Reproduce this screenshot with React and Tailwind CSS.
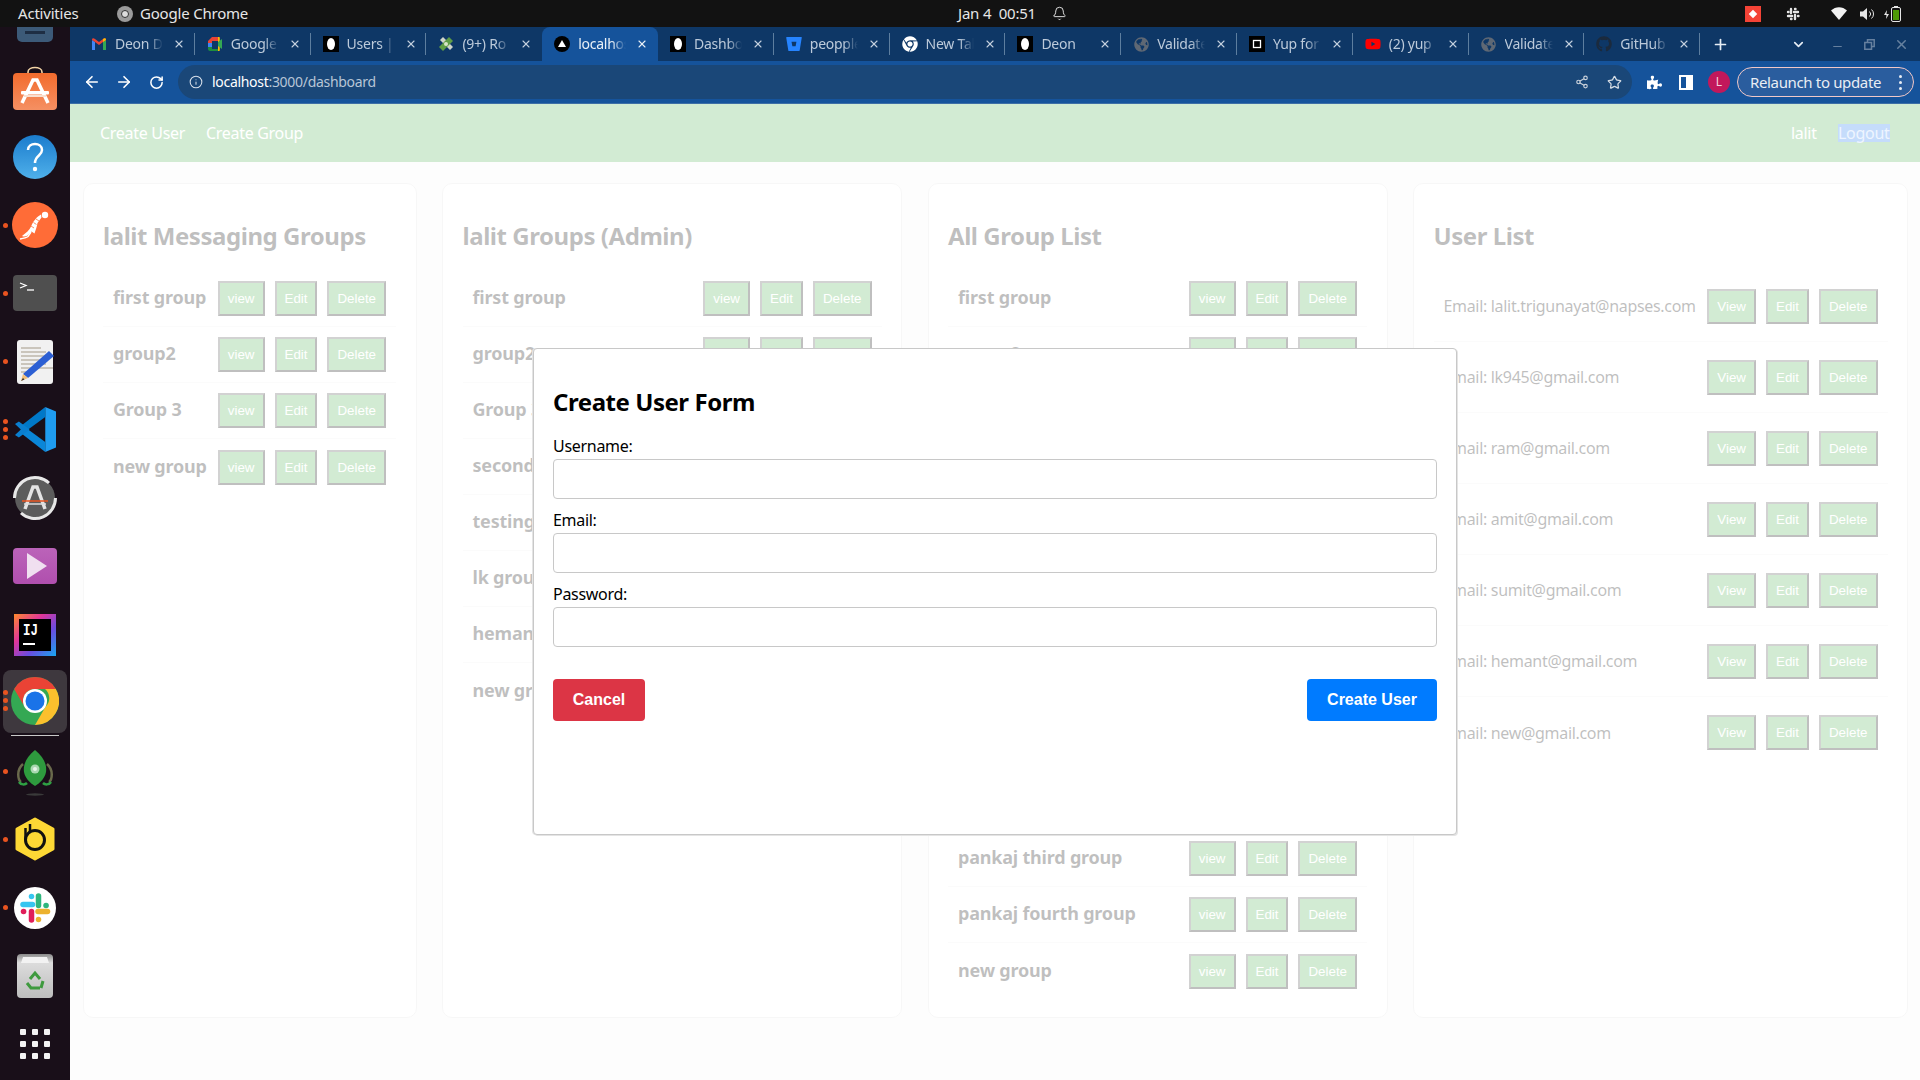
import React from "react";
import { ArrowLeft, ArrowRight, RotateCw, Info, Share2, Star, ChevronDown, Plus, X, Minus, Bell } from "lucide-react";
import { FaPuzzlePiece, FaGithub, FaGlobeAmericas, FaChrome, FaBitbucket, FaYoutube } from "react-icons/fa";

const egg = (
  <svg width="16" height="16" viewBox="0 0 16 16"><rect width="16" height="16" fill="#000" /><ellipse cx="8" cy="8" rx="4" ry="6" fill="#fff" /></svg>
);
const Gmail = () => (
  <svg width="16" height="16" viewBox="0 0 16 16"><path d="M1 14V4l3 2v8z" fill="#4285f4" /><path d="M12 14V6l3-2v10z" fill="#34a853" /><path d="M1 4c0-2 1.500-2 3-1l4 3 4-3c1.500-1 3-1 3 1l-3 2-4 3-4-3z" fill="#ea4335" /><path d="M12 6l3-2c0-2-1.500-2-3-1z" fill="#fbbc04" /></svg>
);
const Meet = () => (
  <svg width="16" height="16" viewBox="0 0 16 16"><path d="M1 5l4-4h6v4H5v2H1z" fill="#ea4335" /><path d="M1 7h4v4H1z" fill="#4285f4" /><path d="M1 11h4v2h6v2H3c-1 0-2-1-2-2z" fill="#1e8e3e" /><path d="M11 1v14h1c.5 0 .8-.5.8-1V2c0-.5-.3-1-.8-1z" fill="#fbbc04" /><path d="M11 6l4-3v10l-4-3z" fill="#34a853" /></svg>
);
const Roadmap = () => (
  <svg width="16" height="16" viewBox="0 0 16 16"><path d="M2 4l3-3 10 10-3 3z" fill="#cfd6c8" /><path d="M1 11L11 1l4 4L5 15z" fill="#5f9e46" /><circle cx="8" cy="8" r="2" fill="#d8e6c8" /></svg>
);
const Vercel = () => (
  <svg width="16" height="16" viewBox="0 0 16 16"><circle cx="8" cy="8" r="8" fill="#000" /><path d="M8 4l4 7H4z" fill="#fff" /></svg>
);
const Yup = () => (
  <svg width="16" height="16" viewBox="0 0 16 16"><rect width="16" height="16" fill="#000" /><rect x="4.500" y="4.500" width="7" height="7" fill="none" stroke="#fff" strokeWidth="1.300" /></svg>
);

const tabs = [
  { t: "Deon D", i: <Gmail /> },
  { t: "Google", i: <Meet /> },
  { t: "Users |", i: egg },
  { t: "(9+) Ro", i: <Roadmap /> },
  { t: "localhost", i: <Vercel />, active: true },
  { t: "Dashboard", i: egg },
  { t: "peopple", i: <FaBitbucket size={16} color="#2684ff" /> },
  { t: "New Tab", i: <FaChrome size={16} color="#ffffff" /> },
  { t: "Deon", i: egg },
  { t: "Validate", i: <FaGlobeAmericas size={15} color="#5f6874" /> },
  { t: "Yup for", i: <Yup /> },
  { t: "(2) yup", i: <FaYoutube size={16} color="#ff0000" /> },
  { t: "Validate", i: <FaGlobeAmericas size={15} color="#5f6874" /> },
  { t: "GitHub", i: <FaGithub size={16} color="#1b2a3d" /> },
];

const card1 = ["first group", "group2", "Group 3", "new group"];
const card2 = ["first group", "group2", "Group 3", "second group", "testing group", "lk group", "hemant group", "new group"];
const card3 = ["first group", "group2", "Group 3", "second group", "testing group", "lk group", "hemant group", "pankaj group", "pankaj second", "amit group", "pankaj third group", "pankaj fourth group", "new group"];
const users = ["lalit.trigunayat@napses.com", "lk945@gmail.com", "ram@gmail.com", "amit@gmail.com", "sumit@gmail.com", "hemant@gmail.com", "new@gmail.com"];

function Btn({ children }) {
  return (
    <button className="ml-[10px] px-[8px] py-[8px] h-[35px] bg-[#4caf50] text-white text-[13.33px] leading-[15px] font-['Liberation_Sans',sans-serif] border-2 border-solid border-t-[#4c4c4c] border-l-[#4c4c4c] border-b-black border-r-black shrink-0">
      {children}
    </button>
  );
}

function Card({ title, width, children }) {
  return (
    <div className="h-[835px] bg-white border border-[#e0e0e0] rounded-[10px] px-[19.5px] pt-[38px] shrink-0" style={{ width }}>
      <h2 className="text-[24px] leading-[27px] font-bold text-black mb-[22px] tracking-[-0.45px] whitespace-nowrap">{title}</h2>
      {children}
    </div>
  );
}

function GroupRow({ name }) {
  return (
    <div className="h-[56px] flex items-center justify-between pl-[10px] pr-[10px] border-b border-[#eeeeee] last:border-b-0">
      <span className="mb-[2px] text-[18px] font-bold text-black whitespace-nowrap tracking-[-0.2px]">{name}</span>
      <div className="flex shrink-0">
        <Btn>view</Btn>
        <Btn>Edit</Btn>
        <Btn>Delete</Btn>
      </div>
    </div>
  );
}

function UserRow({ email }) {
  return (
    <div className="h-[71px] flex items-center justify-between pl-[10px] pr-[10px] border-b border-[#eeeeee] last:border-b-0">
      <span className="text-[16px] text-black whitespace-nowrap tracking-[-0.32px]">Email: {email}</span>
      <div className="flex shrink-0">
        <Btn>View</Btn>
        <Btn>Edit</Btn>
        <Btn>Delete</Btn>
      </div>
    </div>
  );
}

function Field({ label }) {
  return (
    <div className="mb-[8px]">
      <label className="block text-[16px] leading-[22px] h-[26px] pt-[2px] text-black tracking-[-0.3px]">{label}</label>
      <input className="block w-full h-[40px] border border-[#c8c8c8] rounded-[4px] bg-white" />
    </div>
  );
}

function DockSlot({ dots = 0, children }) {
  return (
    <div className="relative h-[68.25px] w-[70px] flex items-center justify-center shrink-0">
      {dots > 0 && (
        <div className="absolute left-[3px] top-0 bottom-0 flex flex-col justify-center gap-[3px]">
          {Array.from({ length: dots }).map((_, i) => (
            <span key={i} className="block w-[5px] h-[5px] rounded-full bg-[#e95420]" />
          ))}
        </div>
      )}
      {children}
    </div>
  );
}

const SoftwareIcon = () => (
  <svg width="44" height="46" viewBox="0 0 44 46">
    <defs><linearGradient id="sw" x1="0" y1="0" x2="0" y2="1"><stop offset="0" stopColor="#f26b2d" /><stop offset="1" stopColor="#f59063" /></linearGradient></defs>
    <path d="M15 9V6c0-6 14-6 14 0v3" fill="none" stroke="#f3d4a6" strokeWidth="1.600" />
    <rect x="0" y="7" width="44" height="37" rx="4" fill="url(#sw)" />
    <path d="M9 37L20 14h4l11 23" fill="none" stroke="#fff" strokeWidth="3.500" />
    <rect x="8" y="25" width="28" height="3.500" rx="1" fill="#fff" />
    <rect x="11" y="29" width="22" height="2" fill="#f9e0d0" />
  </svg>
);
const HelpIcon = () => (
  <svg width="44" height="44" viewBox="0 0 44 44">
    <defs><linearGradient id="hp" x1="0" y1="0" x2="0" y2="1"><stop offset="0" stopColor="#1b7ccd" /><stop offset="1" stopColor="#4fb0ea" /></linearGradient></defs>
    <circle cx="22" cy="22" r="22" fill="url(#hp)" />
    <path d="M15 15c0-8 14-8 14 0 0 6-7 5-7 13" fill="none" stroke="#fff" strokeWidth="2.500" />
    <circle cx="22" cy="34" r="2.200" fill="#fff" />
  </svg>
);
const PostmanIcon = () => (
  <svg width="46" height="46" viewBox="0 0 46 46">
    <circle cx="23" cy="23" r="23" fill="#ff6c37" />
    <circle cx="33" cy="13" r="3.200" fill="#fff" />
    <path d="M29 12.500c-4 2-8 7-10 12-1 2-2 3.500-3.500 5L10 34c2 1 4 .5 5.500-.5l4-4 3 2c1-3 2.500-7 3-10.500l4-5.500z" fill="#fff" />
    <path d="M19 30l-3 4.500c-2 1.500-5 2-8 2.500" fill="none" stroke="#fff" strokeWidth="1.500" />
    <path d="M19 24l3 2M21.500 20.500l3 2M24 17l3 2" stroke="#ff6c37" strokeWidth=".8" />
  </svg>
);
const TerminalIcon = () => (
  <svg width="44" height="36" viewBox="0 0 44 36">
    <rect width="44" height="36" rx="4" fill="#4f4f4f" />
    <path d="M7 8l6 2.500-6 2.500" fill="none" stroke="#fff" strokeWidth="1.300" />
    <path d="M14 15h7" stroke="#fff" strokeWidth="1.300" />
  </svg>
);
const EditorIcon = () => (
  <svg width="38" height="44" viewBox="0 0 38 44">
    <rect x="1" width="36" height="44" rx="3" fill="#f1f1f1" />
    <path d="M5 8h20M5 12h25M5 16h25M5 20h25M5 24h25M5 28h32M5 32h10" stroke="#bdb6aa" strokeWidth="1.400" />
    <path d="M7 34l26-23 5 5-26 22z" fill="#2c5fd3" />
    <path d="M7 34l5 4-7 3z" fill="#f3c078" />
    <path d="M5 41l2-3 1.500 1.500z" fill="#333" />
  </svg>
);
const VSCodeIcon = () => (
  <svg width="41" height="45" viewBox="0 0 42 50" preserveAspectRatio="none">
    <path d="M31 0l11 5v40l-11 5z" fill="#1f9cf0" />
    <path d="M31 0L5 22l6 5L31 11z" fill="#0078c8" />
    <path d="M31 50L5 28l6-5L31 39z" fill="#0a86d8" />
    <path d="M0 18l5-3 26 21v14L0 32z" fill="#0a7fd0" opacity="0" />
    <path d="M0 19l4-3 11 9-11 9-4-3 6-6z" fill="#0a7fd0" />
  </svg>
);
const UpdaterIcon = () => (
  <svg width="46" height="46" viewBox="0 0 46 46">
    <circle cx="23" cy="23" r="20" fill="#5c5c5c" />
    <path d="M2.500 23A20.500 20.500 0 0 1 37 8M43.500 23A20.500 20.500 0 0 1 9 38" fill="none" stroke="#e8e8e8" strokeWidth="3" />
    <path d="M13 34l8-22h4l8 22" fill="none" stroke="#e4e4e4" strokeWidth="3.500" />
    <path d="M10 26h26" stroke="#e95420" strokeWidth="1.500" />
    <path d="M12 29h22" stroke="#dcdcdc" strokeWidth="1.500" />
  </svg>
);
const VideoIcon = () => (
  <svg width="44" height="36" viewBox="0 0 44 36">
    <defs><linearGradient id="vd" x1="0" y1="0" x2="0" y2="1"><stop offset="0" stopColor="#bb63b9" /><stop offset="1" stopColor="#b04fae" /></linearGradient></defs>
    <rect width="44" height="36" rx="4" fill="url(#vd)" />
    <path d="M14 5l20 13-20 13z" fill="#f0dff0" />
  </svg>
);
const IJIcon = () => (
  <svg width="42" height="42" viewBox="0 0 42 42">
    <defs><linearGradient id="ij" x1="0" y1="0" x2="1" y2="1"><stop offset="0" stopColor="#ff8a2c" /><stop offset=".35" stopColor="#e0359a" /><stop offset=".65" stopColor="#6b4ce0" /><stop offset="1" stopColor="#16a8f0" /></linearGradient></defs>
    <rect width="42" height="42" fill="url(#ij)" />
    <rect x="5" y="5" width="32" height="32" fill="#000" />
    <text x="9" y="21" fill="#fff" fontFamily="'Liberation Mono',monospace" fontWeight="700" fontSize="17" textLength="15" lengthAdjust="spacingAndGlyphs">IJ</text>
    <rect x="9" y="29" width="12" height="2" fill="#fff" />
  </svg>
);
const ChromeIcon = () => (
  <svg width="48" height="48" viewBox="0 0 48 48">
    <circle cx="24" cy="24" r="24" fill="#34a853" />
    <path d="M44.800 12A24 24 0 0 1 24 48l10.400-18a12 12 0 0 0-.4-18z" fill="#fbc02d" />
    <path d="M24 0a24 24 0 0 1 20.800 12H24a12 12 0 0 0-10.400 18L3.200 12A24 24 0 0 1 24 0z" fill="#ea4335" />
    <circle cx="24" cy="24" r="12" fill="#fff" />
    <circle cx="24" cy="24" r="9.500" fill="#1a73e8" />
  </svg>
);
const RocketIcon = () => (
  <svg width="36" height="46" viewBox="0 0 36 46">
    <path d="M6 14C-1 20 1 30 4 32M30 14c7 6 5 16 2 18" fill="none" stroke="#6a6a4c" strokeWidth="2.500" />
    <path d="M18 0c9 7 12 15 11 22-1 6-6 11-11 14-5-3-10-8-11-14C6 15 9 7 18 0z" fill="#2e9a3e" />
    <circle cx="18" cy="19" r="4.500" fill="#a8d8b0" />
    <circle cx="18" cy="19" r="2" fill="#e8f4ea" />
    <path d="M2 32c2 3 6 3 8 1M34 32c-2 3-6 3-8 1" fill="none" stroke="#2ea043" strokeWidth="2.500" />
    <ellipse cx="18" cy="44.500" rx="9" ry="1.200" fill="#3a3a3a" />
  </svg>
);
const BeeIcon = () => (
  <svg width="40" height="44" viewBox="0 0 40 44">
    <path d="M20 2l18 10v20L20 42 2 32V12z" fill="#fdd835" stroke="#fdd835" strokeWidth="3" strokeLinejoin="round" />
    <circle cx="20" cy="23" r="9.500" fill="none" stroke="#111" strokeWidth="3" />
    <path d="M10.500 23V11M15 15V7" stroke="#111" strokeWidth="2.500" />
  </svg>
);
const SlackIcon = () => (
  <svg width="42" height="42" viewBox="0 0 42 42">
    <circle cx="21" cy="21" r="21" fill="#fff" />
    <g strokeLinecap="round" strokeWidth="5.500" fill="none">
      <path d="M24.500 9v9.500" stroke="#2eb67d" /><path d="M32 18.500h.1" stroke="#2eb67d" />
      <path d="M9 17.500h9.500" stroke="#36c5f0" /><path d="M17.500 9.500v.1" stroke="#36c5f0" />
      <path d="M17.500 24.500V33" stroke="#e01e5a" /><path d="M9.500 24.500h.1" stroke="#e01e5a" />
      <path d="M24 24.500h9.500" stroke="#ecb22e" /><path d="M24.500 32.500v.1" stroke="#ecb22e" />
    </g>
  </svg>
);
const TrashIcon = () => (
  <svg width="36" height="44" viewBox="0 0 36 44">
    <defs><linearGradient id="tr" x1="0" y1="0" x2="0" y2="1"><stop offset="0" stopColor="#8a8a8a" /><stop offset=".2" stopColor="#dcdcdc" /><stop offset="1" stopColor="#bdbdbd" /></linearGradient></defs>
    <rect width="36" height="44" rx="4" fill="url(#tr)" />
    <path d="M4 9l2-6h24l2 6z" fill="#f2f2f2" />
    <path d="M13 25l5-6 5 6M10 29l4 5h9M26 27l-2 7" fill="none" stroke="#3e9a3e" strokeWidth="3" />
  </svg>
);
const GridIcon = () => (
  <div className="grid grid-cols-3 gap-[6px]">
    {Array.from({ length: 9 }).map((_, i) => (
      <span key={i} className="block w-[6px] h-[6px] rounded-[1px] bg-[#f2f2f2]" />
    ))}
  </div>
);

export default function App() {
  return (
    <div className="w-[1920px] h-[1080px] overflow-hidden flex flex-col font-['Noto_Sans',sans-serif] bg-white">
      {/* system bar */}
      <div className="h-[27px] bg-[#121212] flex items-center text-[#e6e6e6] text-[15px] tracking-[-0.2px] shrink-0">
        <span className="ml-[18px] w-[62px] whitespace-nowrap">Activities</span>
        <span className="ml-[37px] w-[16px] h-[16px] rounded-full bg-[#9b9b9b] flex items-center justify-center">
          <span className="block w-[8px] h-[8px] rounded-full border border-[#333] bg-[#ddd]" />
        </span>
        <span className="ml-[7px] w-[104px] whitespace-nowrap">Google Chrome</span>
        <span className="ml-[714px] w-[76px] whitespace-nowrap">Jan 4&nbsp; 00:51</span>
        <span className="ml-[18px]"><Bell size={15} strokeWidth={1.5} color="#e6e6e6" /></span>
        <span className="ml-[678px] w-[16px] h-[16px] bg-[#f44336] flex items-center justify-center">
          <span className="block w-[6px] h-[6px] rotate-45 bg-white" />
        </span>
        <svg className="ml-[25px]" width="14" height="14" viewBox="0 0 14 14"><g stroke="#e6e6e6" strokeWidth="2.400" strokeLinecap="round"><path d="M5 2v4M9 8v4M2 9h4M8 5h4" /><path d="M2 5h.5M5 12h.5M12 9h.5M9 2h.5" /></g></svg>
        <svg className="ml-[31px]" width="16" height="13" viewBox="0 0 16 13"><path d="M0 3.500C4.500-1 11.500-1 16 3.500L8 13z" fill="#f2f2f2" /></svg>
        <svg className="ml-[13px]" width="15" height="14" viewBox="0 0 15 14"><path d="M0 4.500h3L7 1v12L3 9.500H0z" fill="#e6e6e6" /><path d="M9.500 4.500a3.500 3.500 0 0 1 0 5M11.500 2.500a6 6 0 0 1 0 9" fill="none" stroke="#e6e6e6" /></svg>
        <svg className="ml-[9px]" width="18" height="18" viewBox="0 0 18 18"><path d="M3 5L0 10h2.500L2 14l3-5H2.500z" fill="#e6e6e6" /><rect x="7.500" y="2.500" width="9" height="14" rx="1.500" fill="none" stroke="#e6e6e6" /><rect x="10" y="1" width="4" height="1.500" fill="#e6e6e6" /><rect x="9" y="5" width="6" height="10" fill="#4e9a06" /></svg>
      </div>

      <div className="flex flex-1 min-h-0">
        {/* dock */}
        <div className="w-[70px] shrink-0 bg-[#190f19] overflow-hidden flex flex-col items-center">
          <div className="h-[27.5px] w-[70px] flex justify-center shrink-0">
            <div className="w-[36px] h-[15px] rounded-b-[5px] bg-[#3c5a78] flex justify-center">
              <span className="block w-[20px] h-[3px] mt-[4px] bg-[#1e2e44]" />
            </div>
          </div>
          <DockSlot><SoftwareIcon /></DockSlot>
          <DockSlot><HelpIcon /></DockSlot>
          <DockSlot dots={1}><PostmanIcon /></DockSlot>
          <DockSlot dots={1}><TerminalIcon /></DockSlot>
          <DockSlot dots={1}><EditorIcon /></DockSlot>
          <DockSlot dots={3}><VSCodeIcon /></DockSlot>
          <DockSlot><UpdaterIcon /></DockSlot>
          <DockSlot><VideoIcon /></DockSlot>
          <DockSlot><IJIcon /></DockSlot>
          <div className="relative h-[68.25px] w-[70px] flex items-center justify-center shrink-0">
            <div className="absolute left-[3px] top-[1px] w-[64px] h-[63px] rounded-[8px] bg-[#3e383e]" />
            <div className="absolute left-[3px] top-0 bottom-[4px] flex flex-col justify-center gap-[3px]">
              <span className="block w-[5px] h-[5px] rounded-full bg-[#e95420]" />
              <span className="block w-[5px] h-[5px] rounded-full bg-[#e95420]" />
              <span className="block w-[5px] h-[5px] rounded-full bg-[#e95420]" />
            </div>
            <div className="absolute left-[11px] bottom-[1px] w-[48px] h-[1px] bg-[#c8c8c8]" />
            <div className="relative -translate-y-[2px]"><ChromeIcon /></div>
          </div>
          <DockSlot dots={1}><div className="translate-y-[2px]"><RocketIcon /></div></DockSlot>
          <DockSlot dots={1}><BeeIcon /></DockSlot>
          <DockSlot dots={1}><SlackIcon /></DockSlot>
          <DockSlot><TrashIcon /></DockSlot>
          <DockSlot><GridIcon /></DockSlot>
        </div>

        {/* right side */}
        <div className="flex-1 min-w-0 flex flex-col">
          {/* tab strip */}
          <div className="h-[34px] bg-[#0e3766] flex items-center pl-[9px] shrink-0">
            {tabs.map((tab, i) => {
              const nextActive = tabs[i + 1] && tabs[i + 1].active;
              return (
                <div key={i} className={tab.active ? "relative w-[115.8px] h-[34px] flex items-center pl-[12px] bg-[#15539b] rounded-t-[8px] shrink-0" : "relative w-[115.8px] h-[34px] flex items-center pl-[12px] shrink-0"}>
                  <span className="w-[16px] h-[16px] flex items-center justify-center shrink-0">{tab.i}</span>
                  <span className={tab.active ? "ml-[8px] mb-[2px] w-[48px] overflow-hidden whitespace-nowrap text-[14px] tracking-[-0.25px] text-[#e9f0f7] [mask-image:linear-gradient(to_right,black_70%,transparent)]" : "ml-[8px] mb-[2px] w-[48px] overflow-hidden whitespace-nowrap text-[14px] tracking-[-0.25px] text-[#bccada] [mask-image:linear-gradient(to_right,black_70%,transparent)]"}>{tab.t}</span>
                  <X size={12} strokeWidth={2.2} color={tab.active ? "#e9f0f7" : "#c4d0de"} className="ml-[10px] shrink-0" />
                  {!tab.active && !nextActive && <span className="absolute right-0 top-[6px] h-[22px] w-px bg-[#5d7e9f]" />}
                </div>
              );
            })}
            <span className="w-[40px] flex justify-center"><Plus size={17} strokeWidth={2.4} color="#e6edf5" /></span>
            <span className="ml-[42px] w-[32px] flex justify-center"><ChevronDown size={15} strokeWidth={2.6} color="#e6edf5" /></span>
            <span className="ml-[7px] w-[32px] flex justify-center pt-[4px]"><Minus size={13} strokeWidth={2.2} color="#66809f" /></span>
            <span className="w-[32px] flex justify-center">
              <svg width="11" height="11" viewBox="0 0 11 11"><path d="M3.500 3.500V.8h6.700v6.700H7.500M.8 3.500h6.700v6.700H.8z" fill="none" stroke="#66809f" strokeWidth="1.500" /></svg>
            </span>
            <span className="w-[32px] flex justify-center"><X size={15} strokeWidth={2.4} color="#66809f" /></span>
          </div>

          {/* toolbar */}
          <div className="h-[43px] bg-[#15539b] border-b border-[#3d6ea6] flex items-center pl-[6px] shrink-0">
            <span className="w-[32px] flex justify-center"><ArrowLeft size={18} strokeWidth={2.2} color="#fff" /></span>
            <span className="w-[32px] flex justify-center"><ArrowRight size={18} strokeWidth={2.2} color="#fff" /></span>
            <span className="w-[32px] flex justify-center"><RotateCw size={15} strokeWidth={2.4} color="#fff" /></span>
            <div className="ml-[6px] w-[1454px] h-[34px] rounded-full bg-[#1a4778] flex items-center shrink-0">
              <Info size={14} strokeWidth={1.8} color="#d8e0ea" className="ml-[11px]" />
              <span className="ml-[9px] mb-[1px] w-[165px] whitespace-nowrap text-[14px] tracking-[-0.3px] text-white">localhost<span className="text-[#b7c5d6]">:3000/dashboard</span></span>
              <Share2 size={14} strokeWidth={2} color="#c8d0da" className="ml-auto mr-[1px]" />
              <Star size={15} strokeWidth={2} color="#d5dce4" className="ml-[17px] mr-[10px]" />
            </div>
            <span className="ml-[15px]"><FaPuzzlePiece size={15} color="#fff" /></span>
            <span className="ml-[17px] w-[14px] h-[15px] border-2 border-white flex justify-end">
              <span className="block w-[5px] h-full bg-white" />
            </span>
            <span className="ml-[15px] w-[22px] h-[22px] rounded-full bg-[#c2185b] text-[#f4cfdd] text-[12px] flex items-center justify-center">L</span>
            <div className="ml-[7px] w-[177px] h-[30px] rounded-full border border-[#f0c8c8] bg-[#2a5d9e] flex items-center pl-[12px] shrink-0">
              <span className="w-[136px] whitespace-nowrap text-[15px] tracking-[-0.35px] text-[#e8edf4]">Relaunch to update</span>
              <span className="ml-[13px] flex flex-col gap-[3px]">
                <span className="block w-[3px] h-[3px] rounded-full bg-[#e8edf4]" />
                <span className="block w-[3px] h-[3px] rounded-full bg-[#e8edf4]" />
                <span className="block w-[3px] h-[3px] rounded-full bg-[#e8edf4]" />
              </span>
            </div>
          </div>

          {/* web page */}
          <div className="relative flex-1 min-h-0 bg-[#f8f8f8]">
            <nav className="h-[58px] bg-[#4caf50] flex items-center pl-[30px] text-[16px] text-white tracking-[-0.3px]">
              <span className="w-[86px] whitespace-nowrap">Create User</span>
              <span className="ml-[20px] w-[96px] whitespace-nowrap">Create Group</span>
              <span className="ml-auto w-[27px] whitespace-nowrap">lalit</span>
              <span className="relative z-20 ml-[20px] mr-[30px] w-[52px] h-[18px] leading-[18px] bg-[#c5dcfb] text-[#eef5ff] whitespace-nowrap">Logout</span>
            </nav>

            <div className="flex pt-[21px] pl-[12.5px] gap-[25.5px]">
              <Card title="lalit Messaging Groups" width={334}>
                {card1.map((n) => <GroupRow key={n} name={n} />)}
              </Card>
              <Card title="lalit Groups (Admin)" width={460}>
                {card2.map((n) => <GroupRow key={n} name={n} />)}
              </Card>
              <Card title="All Group List" width={460}>
                {card3.map((n) => <GroupRow key={n} name={n} />)}
              </Card>
              <Card title="User List" width={495}>
                {users.map((n) => <UserRow key={n} email={n} />)}
              </Card>
            </div>

            {/* overlay */}
            <div className="absolute inset-0 z-10 bg-white/75" />

            {/* modal */}
            <div className="absolute z-30 left-[463px] top-[244px] w-[924px] h-[487px] bg-white border border-[#c8c8c8] rounded-[4px] px-[19px] pt-[38px] shadow-[1px_1px_0_#e4e4e4,-1px_0_0_#e4e4e4]">
              <h2 className="text-[24px] leading-[30px] font-bold text-black mb-[16px] tracking-[-0.45px]">Create User Form</h2>
              <Field label="Username:" />
              <Field label="Email:" />
              <Field label="Password:" />
              <div className="flex justify-between mt-[32px]">
                <button className="w-[92px] h-[42px] rounded-[4px] bg-[#dc3545] text-white text-[16px] font-bold font-['Liberation_Sans',sans-serif]">Cancel</button>
                <button className="w-[130px] h-[42px] rounded-[4px] bg-[#007bff] text-white text-[16px] font-bold font-['Liberation_Sans',sans-serif]">Create User</button>
              </div>
            </div>
          </div>
        </div>
      </div>
    </div>
  );
}
